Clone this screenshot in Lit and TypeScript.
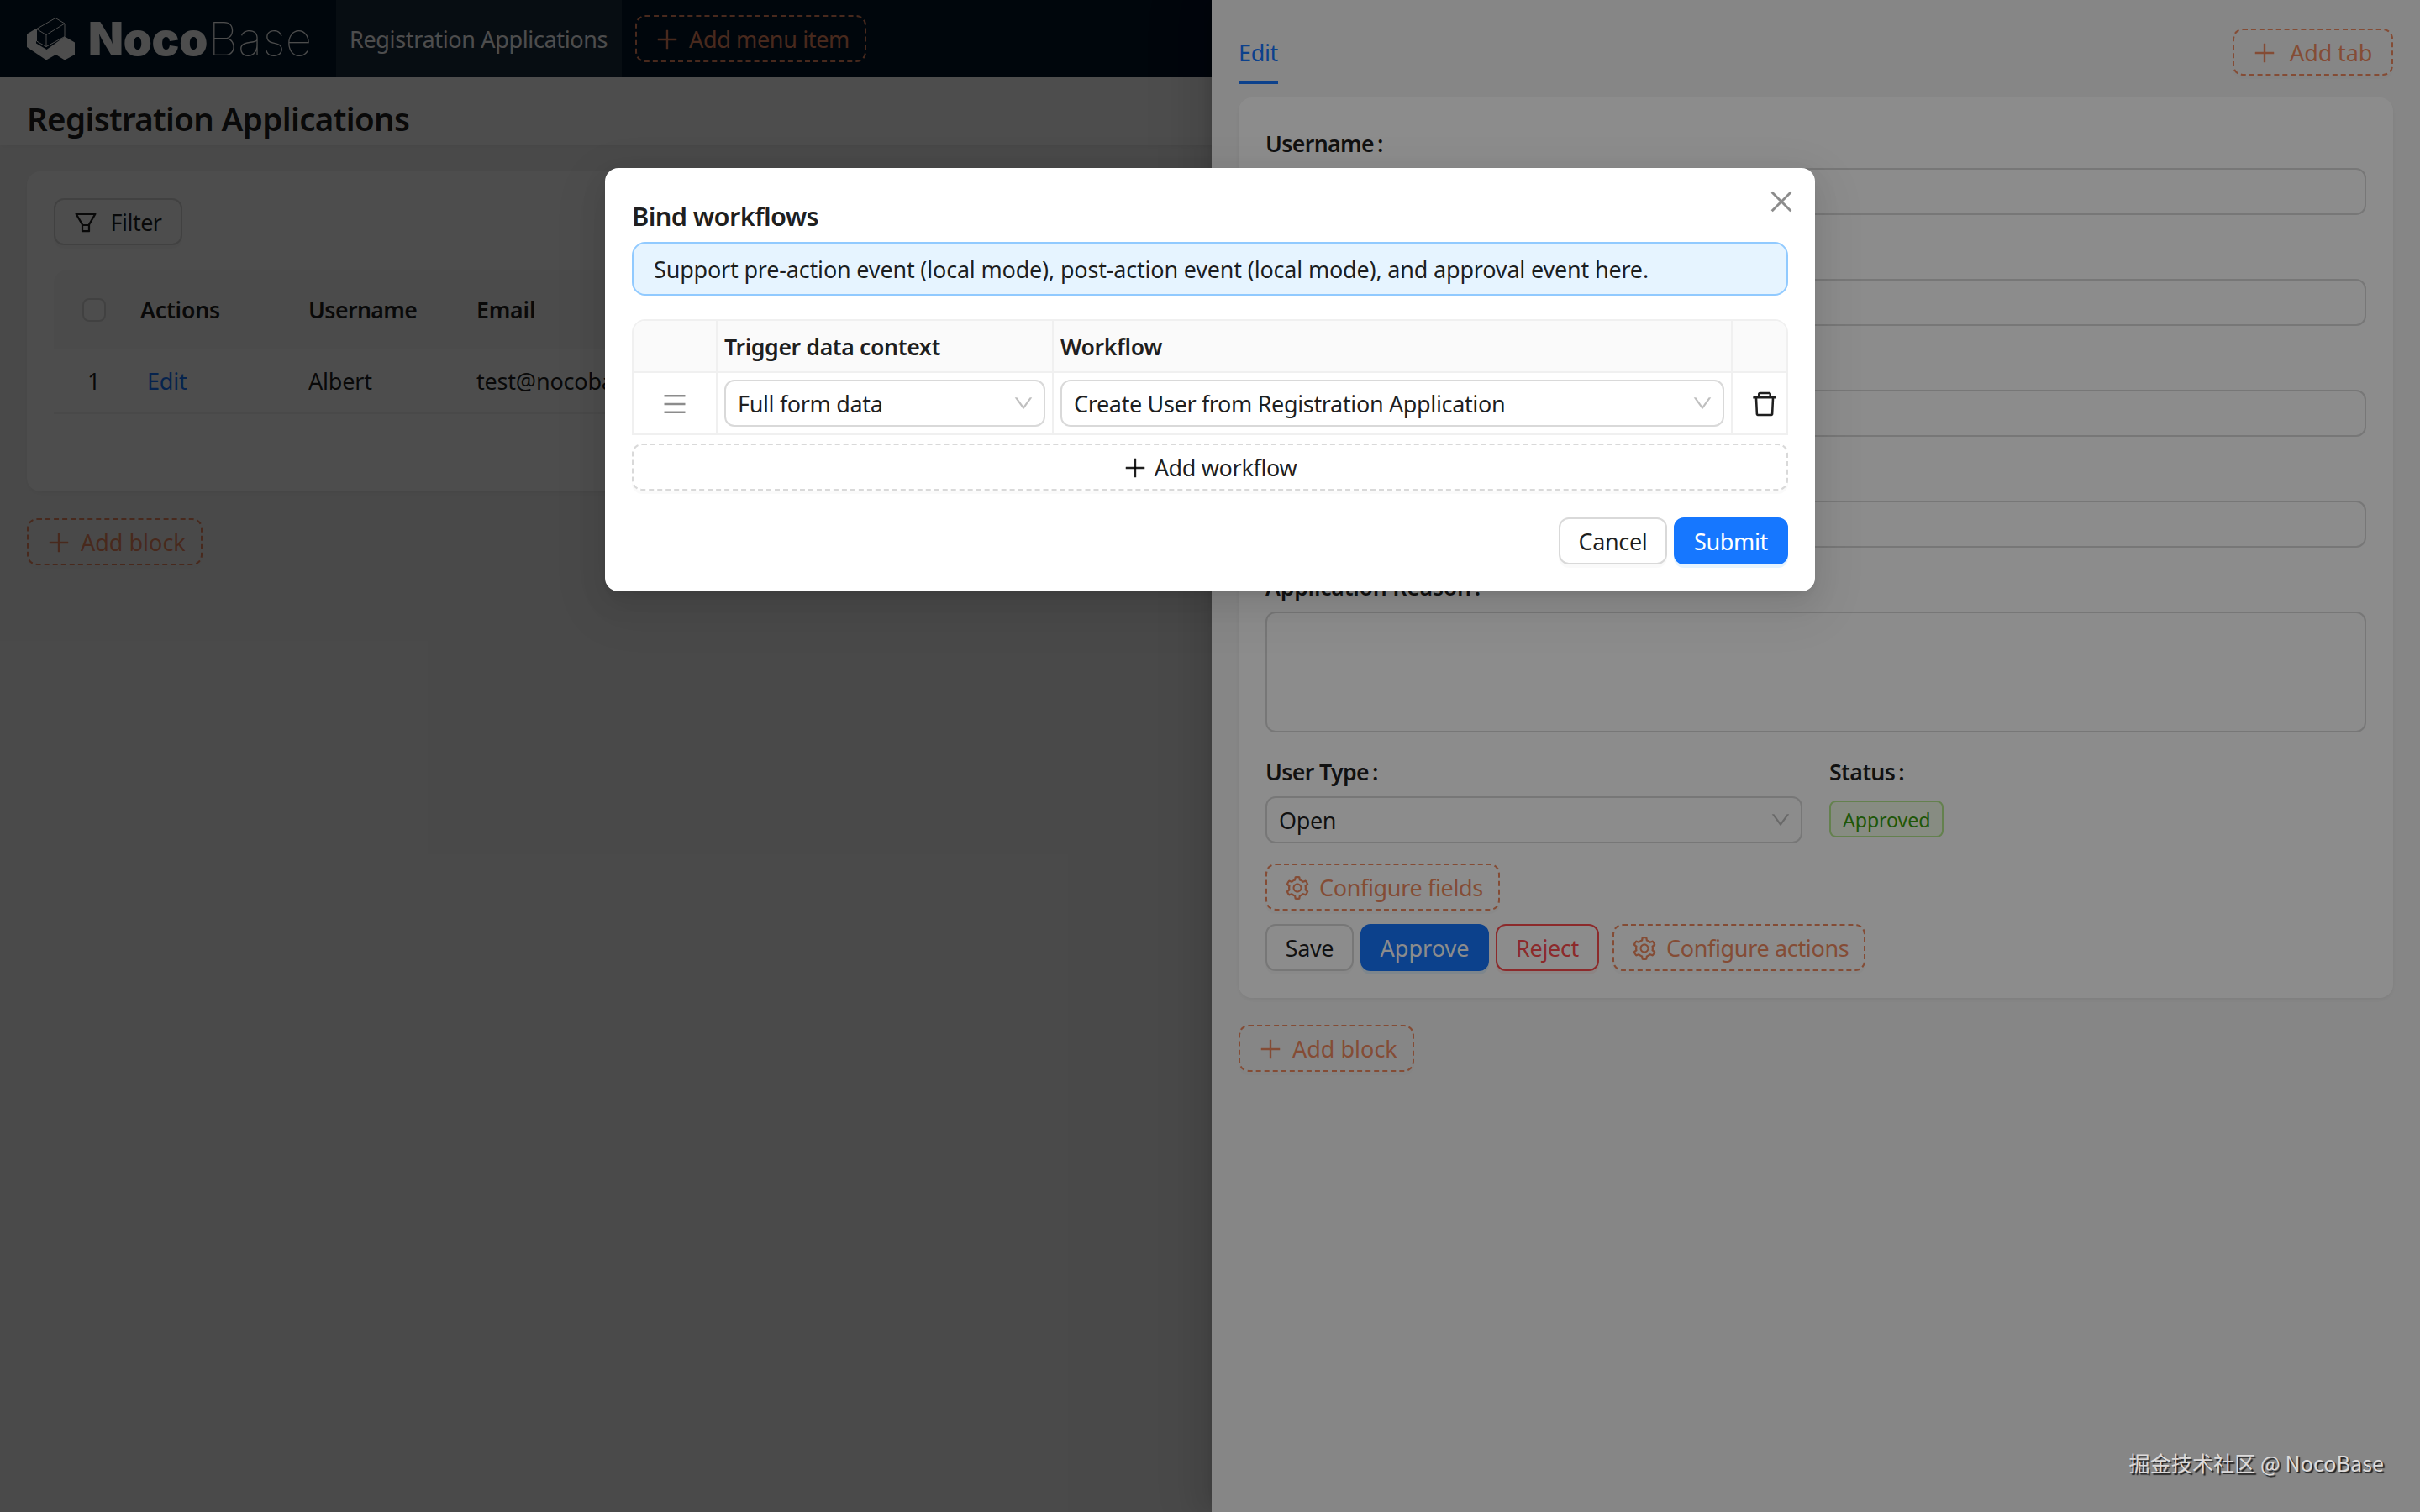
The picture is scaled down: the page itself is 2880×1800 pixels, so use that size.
import { LitElement, html, css, svg } from "lit";
import { customElement } from "lit/decorators.js";

const paths: Record<string, string[]> = {
  plus: [
    "M482 152h60q8 0 8 8v704q0 8-8 8h-60q-8 0-8-8V160q0-8 8-8z",
    "M160 474h704q8 0 8 8v60q0 8-8 8H160q-8 0-8-8v-60q0-8 8-8z",
  ],
  filter: [
    "M880.1 154H143.9c-24.5 0-39.8 26.7-27.5 48L349 597.4V838c0 17.7 14.2 32 31.8 32h262.4c17.6 0 31.8-14.3 31.8-32V597.4L907.7 202c12.2-21.3-3.1-48-27.6-48zM603.4 798H420.6V642h182.9v156zm9.6-236.6l-9.5 16.6h-183l-9.5-16.6L212.7 226h598.6L613 561.4z",
  ],
  down: [
    "M884 256h-75c-5.1 0-9.9 2.5-12.9 6.6L512 654.2 227.9 262.6c-3-4.1-7.8-6.6-12.9-6.6h-75c-6.5 0-10.3 7.4-6.5 12.7l352.6 486.1c12.8 17.6 39 17.6 51.7 0l352.6-486.1c3.9-5.3.1-12.7-6.4-12.7z",
  ],
  menu: [
    "M904 160H120c-4.4 0-8 3.6-8 8v64c0 4.4 3.6 8 8 8h784c4.4 0 8-3.6 8-8v-64c0-4.4-3.6-8-8-8zm0 624H120c-4.4 0-8 3.6-8 8v64c0 4.4 3.6 8 8 8h784c4.4 0 8-3.6 8-8v-64c0-4.4-3.6-8-8-8zm0-312H120c-4.4 0-8 3.6-8 8v64c0 4.4 3.6 8 8 8h784c4.4 0 8-3.6 8-8v-64c0-4.4-3.6-8-8-8z",
  ],
  close: [
    "M799.9 166.3l57.8 57.8L569.9 512l287.8 287.7-57.8 58L512 569.9 224.3 857.7l-58-58L454.1 512 166.3 224.1l58-57.8L512 454.1z",
  ],
  trash: [
    "M360 184h-8c4.4 0 8-3.6 8-8v8h304v-8c0 4.4 3.6 8 8 8h-8v72h72v-80c0-35.3-28.7-64-64-64H352c-35.3 0-64 28.7-64 64v80h72v-72zm504 72H160c-17.7 0-32 14.3-32 32v32c0 4.4 3.6 8 8 8h60.4l24.7 523c1.6 34.1 29.8 61 63.9 61h454c34.2 0 62.3-26.8 63.9-61l24.7-523H888c4.4 0 8-3.6 8-8v-32c0-17.7-14.3-32-32-32zM731.3 840H292.7l-24.2-512h487l-24.2 512z",
  ],
  gear: [
    "M924.8 625.7l-65.5-56c3.1-19 4.7-38.4 4.7-57.8s-1.6-38.8-4.7-57.8l65.5-56a32.03 32.03 0 009.3-35.2l-.9-2.6a443.74 443.74 0 00-79.7-137.9l-1.8-2.1a32.12 32.12 0 00-35.1-9.5l-81.3 28.9c-30-24.6-63.5-44-99.7-57.6l-15.7-85a32.05 32.05 0 00-25.8-25.7l-2.7-.5c-52.1-9.4-106.9-9.4-159 0l-2.7.5a32.05 32.05 0 00-25.8 25.7l-15.8 85.4a351.86 351.86 0 00-99 57.4l-81.9-29.1a32 32 0 00-35.1 9.5l-1.8 2.1a446.02 446.02 0 00-79.7 137.9l-.9 2.6c-4.5 12.5-.8 26.5 9.3 35.2l66.3 56.6c-3.1 18.8-4.6 38-4.6 57.1 0 19.2 1.5 38.4 4.6 57.1L99 625.5a32.03 32.03 0 00-9.3 35.2l.9 2.6c18.1 50.4 44.9 96.9 79.7 137.9l1.8 2.1a32.12 32.12 0 0035.1 9.5l81.9-29.1c29.8 24.5 63.1 43.9 99 57.4l15.8 85.4a32.05 32.05 0 0025.8 25.7l2.7.5a449.4 449.4 0 00159 0l2.7-.5a32.05 32.05 0 0025.8-25.7l15.7-85a350 350 0 0099.7-57.6l81.3 28.9a32 32 0 0035.1-9.5l1.8-2.1c34.8-41.1 61.6-87.5 79.7-137.9l.9-2.6c4.5-12.3.8-26.3-9.3-35zM788.3 465.9c2.5 15.1 3.8 30.6 3.8 46.1s-1.3 31-3.8 46.1l-6.6 40.1 74.7 63.9a370.03 370.03 0 01-42.6 73.6L721 702.8l-31.4 25.8c-23.9 19.6-50.5 35-79.3 45.8l-38.1 14.3-17.9 97a377.5 377.5 0 01-85 0l-17.9-97.2-37.8-14.5c-28.5-10.8-55-26.2-78.7-45.7l-31.4-25.9-93.4 33.2c-17-22.9-31.2-47.6-42.6-73.6l75.5-64.5-6.5-40c-2.4-14.9-3.7-30.3-3.7-45.5 0-15.3 1.2-30.6 3.7-45.5l6.5-40-75.5-64.5c11.3-26.1 25.6-50.7 42.6-73.6l93.4 33.2 31.4-25.9c23.7-19.5 50.2-34.9 78.7-45.7l37.9-14.3 17.9-97.2c28.1-3.2 56.8-3.2 85 0l17.9 97 38.1 14.3c28.7 10.8 55.4 26.2 79.3 45.8l31.4 25.8 92.8-32.9c17 22.9 31.2 47.6 42.6 73.6L781.8 426l6.5 39.9zM512 336c-97.2 0-176 78.8-176 176s78.8 176 176 176 176-78.8 176-176-78.8-176-176-176zm79.2 255.2A111.6 111.6 0 01512 624c-29.9 0-58-11.7-79.2-32.8A111.6 111.6 0 01400 512c0-29.9 11.7-58 32.8-79.2C454 411.6 482.1 400 512 400c29.9 0 58 11.6 79.2 32.8A111.6 111.6 0 01624 512c0 29.9-11.7 58-32.8 79.2z",
  ],
};

const icon = (name: string, cls = "") => html`
  <svg class="icon ${cls}" viewBox="64 64 896 896" fill="currentColor" fill-rule="evenodd">
    ${paths[name].map((d) => svg`<path d=${d}></path>`)}
  </svg>
`;

const label = (text: string, cls = "") =>
  html`<div class="label ${cls}">${text ? html`<span>${text}</span><span class="colon">:</span>` : ""}</div>`;

@customElement("app-root")
export class AppRoot extends LitElement {
  static styles = css`
    :host {
      display: block;
      position: relative;
      width: 2880px;
      height: 1800px;
      overflow: hidden;
      background: #f5f5f5;
      color: rgba(0, 0, 0, 0.88);
      font-family: "Noto Sans", "Open Sans", sans-serif;
      font-size: 27px;
      line-height: 44px;
      letter-spacing: -0.35px;
      white-space: nowrap;
    }
    * {
      box-sizing: border-box;
    }
    .icon {
      width: 28px;
      height: 28px;
      flex: none;
      display: block;
    }
    .layer {
      position: absolute;
      inset: 0;
    }
    .mask {
      background: rgba(0, 0, 0, 0.45);
    }

    .btn {
      display: inline-flex;
      flex: none;
      align-items: center;
      justify-content: center;
      gap: 12px;
      height: 56px;
      padding: 2px 0 0;
      border: 2px solid #d9d9d9;
      border-radius: 12px;
      background: #fff;
      box-shadow: 0 4px 0 rgba(0, 0, 0, 0.02);
    }
    .dashed {
      border-style: dashed;
    }
    .design {
      justify-content: flex-start;
      padding-left: 22px;
      border: 2px dashed #f18b62;
      color: #f18b62;
      background: transparent;
    }
    .primary {
      border-color: #1677ff;
      background: #1677ff;
      color: #fff;
      box-shadow: 0 4px 0 rgba(5, 145, 255, 0.1);
    }
    .danger {
      border-color: #ff4d4f;
      color: #ff4d4f;
      box-shadow: 0 4px 0 rgba(255, 38, 5, 0.06);
    }
    .loose {
      letter-spacing: 0;
    }
    .add-menu {
      width: 275px;
    }
    .filter {
      width: 153px;
      gap: 15px;
      letter-spacing: -0.5px;
    }
    .add-block {
      width: 209px;
    }
    .add-tab {
      width: 191px;
      gap: 16px;
      letter-spacing: -0.1px;
    }
    .conf-fields {
      width: 279px;
    }
    .save {
      width: 105px;
    }
    .approve {
      width: 153px;
    }
    .reject {
      width: 123px;
    }
    .conf-actions {
      width: 301px;
      margin-left: 8px;
    }
    .cancel {
      width: 129px;
    }
    .submit {
      width: 136px;
    }

    .topbar {
      display: flex;
      align-items: center;
      height: 92px;
      background: #001529;
      color: #fff;
    }
    .brand {
      display: flex;
      align-items: center;
      width: 400px;
      height: 92px;
      padding-left: 32px;
    }
    .mark {
      width: 58px;
      height: 52px;
      flex: none;
    }
    .noco,
    .base {
      font-family: Inter, sans-serif;
      font-size: 54.6px;
      line-height: 92px;
    }
    .noco {
      margin-left: 15px;
      width: 143px;
      font-weight: 900;
      letter-spacing: -0.3px;
    }
    .base {
      font-weight: 100;
      letter-spacing: 0.4px;
    }
    .menu-item {
      width: 340px;
      height: 92px;
      line-height: 94px;
      padding-left: 16px;
      background: rgba(255, 255, 255, 0.1);
      margin-right: 16px;
    }
    .page-title {
      height: 81px;
      padding: 17px 32px 0;
      background: #fff;
      font-size: 38.5px;
      line-height: 64px;
      font-weight: 600;
      letter-spacing: -0.66px;
      box-shadow: 0 2px 4px rgba(0, 0, 0, 0.03), 0 2px 12px -2px rgba(0, 0, 0, 0.02);
    }
    .content {
      display: flex;
      flex-direction: column;
      align-items: flex-start;
      gap: 32px;
      padding: 31px 32px;
    }
    .card {
      background: #fff;
      border-radius: 16px;
      box-shadow: 0 2px 4px rgba(0, 0, 0, 0.03), 0 2px 12px -2px rgba(0, 0, 0, 0.02),
        0 4px 8px rgba(0, 0, 0, 0.02);
    }
    .table-card {
      width: 2816px;
      height: 381px;
      padding: 32px;
    }
    .grid-head,
    .grid-row {
      display: grid;
      grid-template-columns: 103px 200px 200px 1fr;
      align-items: center;
    }
    .grid-head {
      margin-top: 29px;
      height: 94px;
      background: #fafafa;
      border-radius: 16px 16px 0 0;
      font-weight: 600;
      font-size: 26.7px;
      letter-spacing: -0.6px;
      padding-top: 2px;
    }
    .grid-head .loose {
      letter-spacing: -0.2px;
    }
    .grid-row {
      height: 78px;
      padding-top: 2px;
      border-bottom: 2px solid #f5f5f5;
      letter-spacing: -0.2px;
    }
    .check {
      width: 28px;
      height: 28px;
      margin-left: 34px;
      border: 2px solid #d9d9d9;
      border-radius: 8px;
      background: #fff;
    }
    .num {
      padding-left: 40px;
    }
    .link {
      color: #1677ff;
      padding-left: 8px;
    }

    .drawer {
      position: absolute;
      top: 0;
      left: 1442px;
      right: 0;
      bottom: 0;
      background: #f5f5f5;
      padding: 34px 32px;
      box-shadow: -12px 0 32px 0 rgba(0, 0, 0, 0.08), -6px 0 12px -8px rgba(0, 0, 0, 0.12),
        -18px 0 56px 16px rgba(0, 0, 0, 0.05);
    }
    .tabs {
      display: flex;
      justify-content: space-between;
      height: 66px;
      margin-bottom: 16px;
    }
    .tab {
      height: 66px;
      line-height: 58px;
      color: #1677ff;
      border-bottom: 4px solid #1677ff;
    }
    .form {
      height: 1072px;
      padding: 32px;
      margin-bottom: 32px;
    }
    .label {
      height: 52px;
      line-height: 46px;
      font-weight: 600;
      font-size: 26.7px;
      letter-spacing: -0.65px;
    }
    .label.wide {
      letter-spacing: -0.25px;
    }
    .colon {
      margin-left: 4px;
    }
    .input {
      height: 56px;
      margin-bottom: 24px;
      border: 2px solid #d9d9d9;
      border-radius: 12px;
      background: #fff;
    }
    .area {
      height: 144px;
    }
    .pair {
      display: flex;
      gap: 32px;
      height: 132px;
    }
    .half {
      width: 639px;
    }
    .select {
      display: flex;
      align-items: center;
      justify-content: space-between;
      height: 56px;
      padding: 0 12px 0 14px;
      border: 2px solid #d9d9d9;
      border-radius: 12px;
      background: #fff;
    }
    .select span {
      padding-top: 2px;
    }
    .arrow {
      width: 24px;
      height: 24px;
      color: rgba(0, 0, 0, 0.25);
    }
    .tag {
      display: inline-block;
      height: 44px;
      margin-top: 5px;
      padding: 0 14px;
      border: 2px solid #b7eb8f;
      border-radius: 8px;
      background: #f6ffed;
      color: #389e0d;
      font-size: 23.2px;
      line-height: 42px;
      letter-spacing: -0.1px;
    }
    .actions {
      display: flex;
      gap: 8px;
      margin-top: 16px;
    }

    .modal {
      position: absolute;
      left: 720px;
      top: 200px;
      width: 1440px;
      height: 504px;
      padding: 32px;
      border-radius: 16px;
      background: #fff;
      box-shadow: 0 12px 32px 0 rgba(0, 0, 0, 0.08), 0 6px 12px -8px rgba(0, 0, 0, 0.12),
        0 18px 56px 16px rgba(0, 0, 0, 0.05);
    }
    .close {
      position: absolute;
      right: 24px;
      top: 24px;
      width: 32px;
      height: 32px;
      color: rgba(0, 0, 0, 0.45);
    }
    .modal-title {
      height: 56px;
      font-size: 30.8px;
      line-height: 50px;
      font-weight: 600;
      letter-spacing: -0.65px;
    }
    .alert {
      height: 64px;
      padding: 0 24px;
      border: 2px solid #91caff;
      border-radius: 16px;
      background: #e6f4ff;
      line-height: 61px;
      letter-spacing: -0.19px;
      margin-bottom: 28px;
    }
    .flows {
      height: 138px;
      margin-bottom: 10px;
      border: 2px solid #f0f0f0;
      border-radius: 16px 16px 0 0;
      overflow: hidden;
    }
    .flow-head,
    .flow-row {
      display: grid;
      grid-template-columns: 100px 400px 808px 64px;
    }
    .flow-head {
      height: 62px;
      background: #fafafa;
      border-bottom: 2px solid #f0f0f0;
      font-weight: 600;
      font-size: 26.7px;
      letter-spacing: -0.4px;
      line-height: 61px;
    }
    .flow-row {
      height: 72px;
      align-items: stretch;
    }
    .cell {
      padding: 0 8px;
      border-right: 2px solid #f0f0f0;
    }
    .flow-row .cell {
      padding: 8px 8px 0;
    }
    .cell.last {
      border-right: 0;
    }
    .center {
      display: flex;
      justify-content: center;
      align-items: center;
    }
    .flow-row .center {
      padding: 2px 0 0;
    }
    .handle {
      width: 28px;
      height: 28px;
      color: rgba(0, 0, 0, 0.45);
    }
    .trash {
      width: 32px;
      height: 32px;
      margin-left: 12px;
    }
    .add-flow {
      display: flex;
      width: 100%;
      gap: 9px;
      margin-bottom: 32px;
    }
    .footer {
      display: flex;
      justify-content: flex-end;
      gap: 8px;
    }
    .watermark {
      position: absolute;
      right: 43px;
      top: 1722px;
      font-family: "Noto Sans CJK SC", sans-serif;
      font-size: 25px;
      line-height: 38px;
      letter-spacing: 0.12px;
      color: #dcdada;
      text-shadow: 2px 2px 1px #222;
    }
  `;

  private renderPage() {
    return html`
      <div class="layer">
        <div class="topbar">
          <div class="brand">
            <svg class="mark" viewBox="0 0 58 52">
              <path
                fill="#fff"
                d="M0 20.5 11 14v17.5L23.5 39 45 23.5l12 7V45L45 51.5 34.5 45 23 51.5 0 36z"
              ></path>
              <path
                fill="none"
                stroke="#fff"
                stroke-width="1"
                stroke-linejoin="round"
                d="M11.5 14.5 34 1.5 45 8v15.5L23 35.5 11.5 29zM11.5 14.5 23 21.5 45 8M23 21.5v14"
              ></path>
            </svg>
            <span class="noco">Noco</span><span class="base">Base</span>
          </div>
          <div class="menu-item">Registration Applications</div>
          <div class="btn design add-menu">${icon("plus")}<span>Add menu item</span></div>
        </div>
        <div class="page-title">Registration Applications</div>
        <div class="content">
          <div class="card table-card">
            <div class="btn filter">${icon("filter")}<span>Filter</span></div>
            <div class="grid-head">
              <div class="check"></div>
              <div class="loose">Actions</div>
              <div>Username</div>
              <div class="loose">Email</div>
            </div>
            <div class="grid-row">
              <div class="num">1</div>
              <div class="link">Edit</div>
              <div>Albert</div>
              <div>test@nocobase.com</div>
            </div>
          </div>
          <div class="btn design add-block loose">${icon("plus")}<span>Add block</span></div>
        </div>
      </div>
    `;
  }

  private renderDrawer() {
    return html`
      <div class="drawer">
        <div class="tabs">
          <div class="tab">Edit</div>
          <div class="btn design add-tab">${icon("plus")}<span>Add tab</span></div>
        </div>
        <div class="card form">
          ${label("Username")}
          <div class="input"></div>
          ${[0, 1, 2].map(() => html`${label("")}<div class="input"></div>`)}
          ${label("Application Reason", "wide")}
          <div class="input area"></div>
          <div class="pair">
            <div class="half">
              ${label("User Type")}
              <div class="select"><span>Open</span>${icon("down", "arrow")}</div>
            </div>
            <div class="half">
              ${label("Status")}
              <div class="tag">Approved</div>
            </div>
          </div>
          <div class="btn design conf-fields">${icon("gear")}<span>Configure fields</span></div>
          <div class="actions">
            <div class="btn save">Save</div>
            <div class="btn primary approve loose">Approve</div>
            <div class="btn danger reject">Reject</div>
            <div class="btn design conf-actions">${icon("gear")}<span>Configure actions</span></div>
          </div>
        </div>
        <div class="btn design add-block loose">${icon("plus")}<span>Add block</span></div>
      </div>
    `;
  }

  private renderModal() {
    return html`
      <div class="modal">
        ${icon("close", "close")}
        <div class="modal-title">Bind workflows</div>
        <div class="alert">
          Support pre-action event (local mode), post-action event (local mode), and approval event here.
        </div>
        <div class="flows">
          <div class="flow-head">
            <div class="cell"></div>
            <div class="cell">Trigger data context</div>
            <div class="cell">Workflow</div>
            <div class="cell last"></div>
          </div>
          <div class="flow-row">
            <div class="cell center">${icon("menu", "handle")}</div>
            <div class="cell">
              <div class="select"><span>Full form data</span>${icon("down", "arrow")}</div>
            </div>
            <div class="cell">
              <div class="select">
                <span>Create User from Registration Application</span>${icon("down", "arrow")}
              </div>
            </div>
            <div class="cell last center">${icon("trash", "trash")}</div>
          </div>
        </div>
        <div class="btn dashed add-flow">${icon("plus")}<span>Add workflow</span></div>
        <div class="footer">
          <div class="btn cancel">Cancel</div>
          <div class="btn primary submit">Submit</div>
        </div>
      </div>
    `;
  }

  render() {
    return html`
      ${this.renderPage()}
      <div class="layer mask"></div>
      ${this.renderDrawer()}
      <div class="layer mask"></div>
      ${this.renderModal()}
      <div class="watermark">掘金技术社区 @ NocoBase</div>
    `;
  }
}
